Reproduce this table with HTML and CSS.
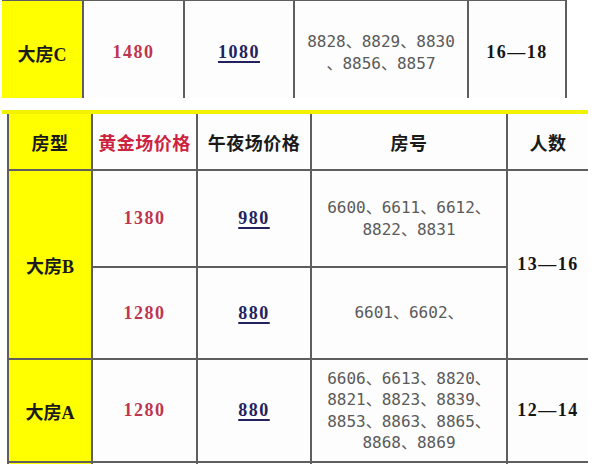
FILE: index.html
```html
<!DOCTYPE html>
<html lang="zh">
<head>
<meta charset="utf-8">
<title>房型价格表</title>
<link rel="stylesheet" href="styles.css">
</head>
<body>
<div class="page">
  <div class="grid top">
    <div class="cell label">大房C</div>
    <div class="cell price">1480</div>
    <div class="cell night">1080</div>
    <div class="cell rooms">8828、8829、8830<br>、8856、8857</div>
    <div class="cell people">16—18</div>
  </div>

  <div class="band"></div>

  <div class="grid bottom">
    <div class="cell label head">房型</div>
    <div class="cell head red">黄金场价格</div>
    <div class="cell head">午夜场价格</div>
    <div class="cell head">房号</div>
    <div class="cell head">人数</div>

    <div class="cell label span2">大房B</div>
    <div class="cell price">1380</div>
    <div class="cell night">980</div>
    <div class="cell rooms">6600、6611、6612、<br>8822、8831</div>
    <div class="cell people span2">13—16</div>

    <div class="cell price">1280</div>
    <div class="cell night">880</div>
    <div class="cell rooms">6601、6602、</div>

    <div class="cell label">大房A</div>
    <div class="cell price">1280</div>
    <div class="cell night">880</div>
    <div class="cell rooms">6606、6613、8820、<br>8821、8823、8839、<br>8853、8863、8865、<br>8868、8869</div>
    <div class="cell people">12—14</div>

    <div class="cell label"></div>
    <div class="cell"></div>
    <div class="cell"></div>
    <div class="cell"></div>
    <div class="cell"></div>
  </div>
</div>
</body>
</html>
```

FILE: styles.css
```css
html, body {
  margin: 0;
  padding: 0;
  background: #ffffff;
}

.page {
  width: 600px;
  height: 464px;
  overflow: hidden;
  background: #ffffff;
}

.grid {
  display: grid;
  column-gap: 2px;
  row-gap: 2px;
  background: #5e5e5e;
  width: max-content;
}

.top {
  grid-template-columns: 80px 99px 108px 172px 96px;
  grid-template-rows: 107px;
  height: 97px;
  overflow: hidden;
  margin-left: 2px;
  padding: 1px 2px 0 0;
}

.top .cell {
  padding-bottom: 4px;
}

.band {
  margin: 12px 0 0 2px;
  width: 586px;
  height: 4px;
  background: #f2f200;
}

.bottom {
  grid-template-columns: 82px 103px 112px 194px 80px;
  grid-template-rows: 55px 95px 90px 101px 20px;
  margin-left: 7px;
  padding-left: 2px;
}

.cell {
  background: #fdfdfd;
  display: flex;
  align-items: center;
  justify-content: center;
  text-align: center;
  color: #1e1e1e;
}

.span2 {
  grid-row: span 2;
}

.label {
  background: #ffff00;
  font-family: "Liberation Serif", "Noto Sans CJK SC", serif;
  font-weight: 700;
  font-size: 18px;
  color: #1a1a1a;
}

.head {
  font-family: "Noto Sans CJK SC", sans-serif;
  font-weight: 700;
  font-size: 18px;
  letter-spacing: 0.5px;
  color: #1a1a1a;
}

.head.red {
  color: #cc2440;
}

.price,
.night,
.people {
  font-family: "Liberation Serif", serif;
  font-weight: 700;
  font-size: 18px;
  letter-spacing: 1.5px;
}

.price {
  color: #bd3550;
}

.night {
  color: #22225e;
  text-decoration: underline;
  text-decoration-thickness: 1.5px;
  text-underline-offset: 3px;
}

.people {
  color: #151515;
}

.rooms {
  font-family: "DejaVu Sans Mono", "Noto Sans CJK SC", monospace;
  font-size: 16px;
  line-height: 21.5px;
  color: #5a5a5a;
}
```
